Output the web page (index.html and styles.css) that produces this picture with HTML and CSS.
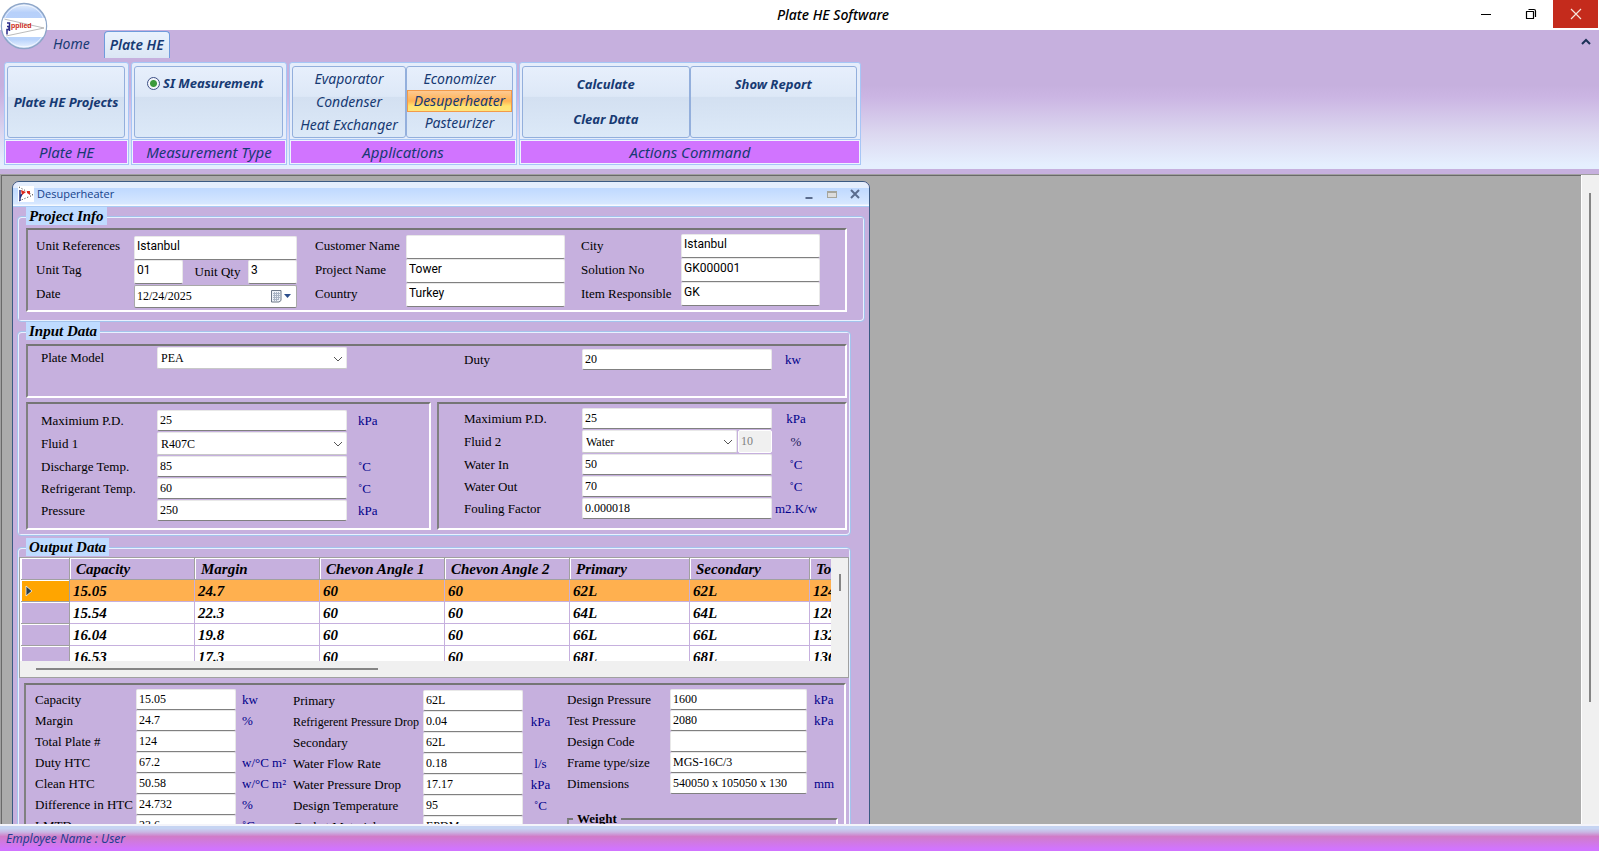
FILE: index.html
```html
<!DOCTYPE html>
<html lang="en">
<head>
<meta charset="utf-8">
<title>Plate HE Software</title>
<link rel="stylesheet" href="styles.css">
</head>
<body>
<header class="titlebar">
  <h1 class="app-title">Plate HE Software</h1>
  <div class="window-controls">
    <button class="wc" aria-label="Minimize"><svg width="12" height="12" viewBox="0 0 12 12"><path d="M1 6.500h10" stroke="#000" fill="none"/></svg></button>
    <button class="wc" aria-label="Restore"><svg width="12" height="12" viewBox="0 0 12 12"><path d="M1.500 3.500h7v7h-7zM3.500 1.500h5.500q1.500 0 1.500 1.500v6" stroke="#000" stroke-width="1.200" stroke-linejoin="round" fill="none"/></svg></button>
    <button class="wc close" aria-label="Close"><svg width="12" height="12" viewBox="0 0 12 12"><path d="M1 1l10 10M11 1L1 11" stroke="#f6e4dc" stroke-width="1.200" fill="none"/></svg></button>
  </div>
</header>

<button class="orb" aria-label="Application menu">
  <svg width="48" height="48" viewBox="0 0 48 48">
    <defs>
      <linearGradient id="orbfill" x1="0" y1="0" x2="0" y2="1"><stop offset="0" stop-color="#e8f0fc"/><stop offset=".2" stop-color="#b7d0fa"/><stop offset=".8" stop-color="#b9d3fb"/><stop offset="1" stop-color="#edf5ff"/></linearGradient>
      <clipPath id="orbclip"><circle cx="24" cy="24" r="22"/></clipPath>
    </defs>
    <circle cx="24" cy="24" r="22.500" fill="url(#orbfill)" stroke="#8ea6c8" stroke-width="1.500"/>
    <g clip-path="url(#orbclip)">
      <rect x="2" y="16" width="44" height="19" fill="#fff"/>
      <path d="M4 17L44 26L6 34" fill="none" stroke="#aaa" stroke-width=".8"/>
      <path d="M7 21h2.500v8M7 24.500h2v3h-2v5" fill="none" stroke="#2d2d8a" stroke-width="1.500"/>
      <text x="11" y="26" font-family="Liberation Sans" font-weight="700" font-size="7" fill="#cc2a12">pplied</text>
    </g>
    <circle cx="24" cy="24" r="20.800" fill="none" stroke="#fff" stroke-opacity=".6"/>
  </svg>
</button>

<section class="ribbon">
  <nav class="tabs">
    <a class="tab" href="#home">Home</a>
    <a class="tab active" href="#plate-he">Plate HE</a>
    <button class="collapse" aria-label="Collapse ribbon"><svg width="10" height="8" viewBox="0 0 10 8"><path d="M1 6l4-4l4 4" fill="none" stroke="#1c3157" stroke-width="2"/></svg></button>
  </nav>
  <div class="groups">
    <section class="group g-projects">
      <div class="boxes"><div class="box middle"><button class="cmd strong">Plate HE Projects</button></div></div>
      <h2 class="caption">Plate HE</h2>
    </section>
    <section class="group g-measure">
      <div class="boxes"><div class="box measure"><input type="radio" id="si" name="measure" class="radio" checked><label for="si" class="strong">SI Measurement</label></div></div>
      <h2 class="caption">Measurement Type</h2>
    </section>
    <section class="group g-apps">
      <div class="boxes">
        <div class="box list wide"><button class="cmd">Evaporator</button><button class="cmd">Condenser</button><button class="cmd">Heat Exchanger</button></div>
        <div class="box list"><button class="cmd">Economizer</button><button class="cmd selected">Desuperheater</button><button class="cmd">Pasteurizer</button></div>
      </div>
      <h2 class="caption">Applications</h2>
    </section>
    <section class="group g-actions">
      <div class="boxes">
        <div class="box actions"><button class="cmd strong">Calculate</button><button class="cmd strong">Clear Data</button></div>
        <div class="box actions"><button class="cmd strong">Show Report</button></div>
      </div>
      <h2 class="caption">Actions Command</h2>
    </section>
  </div>
</section>

<main class="workspace">
  <div class="desk">
    <section class="child">
      <header class="child-bar">
        <svg width="16" height="16" viewBox="0 0 16 16"><rect width="16" height="16" fill="#fff"/><path d="M1 1l14 8M1 15l14-6" stroke="#333" stroke-dasharray="1 2" fill="none"/><path d="M2 4v11M2 12l2-4" stroke="#23307f" stroke-width="1.500" fill="none"/><path d="M3 4l5 2l-4 3zM9 5l3 0l0 4l-3-2z" fill="#d9261c"/></svg>
        <h2 class="child-title">Desuperheater</h2>
        <button class="cb" aria-label="Minimize"><svg width="10" height="10" viewBox="0 0 10 10"><path d="M1.500 9h7" stroke="#5a6c8e" stroke-width="2"/></svg></button>
        <button class="cb" aria-label="Maximize"><svg width="10" height="10" viewBox="0 0 10 10"><rect x=".5" y="2.500" width="9" height="6" fill="#dcdcdc" stroke="#a5a59c"/><path d="M0 3h10" stroke="#a5a59c" stroke-width="2"/></svg></button>
        <button class="cb" aria-label="Close"><svg width="10" height="10" viewBox="0 0 10 10"><path d="M1 1l8 8M9 1L1 9" stroke="#5a6c8e" stroke-width="2"/></svg></button>
      </header>

      <form class="content">
        <fieldset class="sect info">
          <legend>Project Info</legend>
          <div class="panel info-panel">
            <div class="form info-a">
              <label for="uref">Unit References</label><input id="uref" class="sans" value="Istanbul">
              <label for="utag">Unit Tag</label>
              <div class="pair"><input id="utag" class="sans" value="01"><label for="uqty">Unit Qty</label><input id="uqty" class="sans" value="3"></div>
              <label for="date">Date</label>
              <div class="date"><input id="date" value="12/24/2025"><svg width="22" height="14" viewBox="0 0 22 14"><path d="M1.500 1.500h9.500v10l-2 1.500h-7.500z" fill="#eef2f8" stroke="#6d7888"/><path d="M3 4.500h7M3 6.500h7M3 8.500h7M3 10.500h5M4.500 3v9M6.500 3v9M8.500 3v8" stroke="#a9b4c4"/><path d="M14 5h7l-3.500 4z" fill="#2d4f8c"/></svg></div>
            </div>
            <div class="form info-b">
              <label for="cust">Customer Name</label><input id="cust" class="sans" value="">
              <label for="proj">Project Name</label><input id="proj" class="sans" value="Tower">
              <label for="country">Country</label><input id="country" class="sans" value="Turkey">
            </div>
            <div class="form info-c">
              <label for="city">City</label><input id="city" class="sans" value="Istanbul">
              <label for="sol">Solution No</label><input id="sol" class="sans" value="GK000001">
              <label for="item">Item Responsible</label><input id="item" class="sans" value="GK">
            </div>
          </div>
        </fieldset>

        <fieldset class="sect input">
          <legend>Input Data</legend>
          <div class="panel model-panel">
            <div class="form in-a">
              <label for="model">Plate Model</label>
              <span class="pick"><select id="model"><option>PEA</option></select><svg width="10" height="6" viewBox="0 0 10 6"><path d="M1 1l4 4l4-4" fill="none" stroke="#555"/></svg></span>
            </div>
            <div class="form in-b duty">
              <label for="duty">Duty</label><input id="duty" value="20"><span class="unit">kw</span>
            </div>
          </div>
          <div class="fluids">
            <div class="panel fluid-1">
              <div class="form in-a five">
                <label for="pd1">Maximium P.D.</label><input id="pd1" value="25"><span class="unit">kPa</span>
                <label for="f1">Fluid 1</label><span class="pick"><select id="f1"><option>R407C</option></select><svg width="10" height="6" viewBox="0 0 10 6"><path d="M1 1l4 4l4-4" fill="none" stroke="#555"/></svg></span><span></span>
                <label for="dt">Discharge Temp.</label><input id="dt" value="85"><span class="unit">˚C</span>
                <label for="rt">Refrigerant Temp.</label><input id="rt" value="60"><span class="unit">˚C</span>
                <label for="pr">Pressure</label><input id="pr" value="250"><span class="unit">kPa</span>
              </div>
            </div>
            <div class="panel fluid-2">
              <div class="form in-b five">
                <label for="pd2">Maximium P.D.</label><input id="pd2" value="25"><span class="unit">kPa</span>
                <label for="f2">Fluid 2</label><span class="split"><span class="pick"><select id="f2"><option>Water</option></select><svg width="10" height="6" viewBox="0 0 10 6"><path d="M1 1l4 4l4-4" fill="none" stroke="#555"/></svg></span><input class="off" aria-label="Fluid 2 percentage" value="10" disabled></span><span class="unit pct">%</span>
                <label for="wi">Water In</label><input id="wi" value="50"><span class="unit">˚C</span>
                <label for="wo">Water Out</label><input id="wo" value="70"><span class="unit">˚C</span>
                <label for="ff">Fouling Factor</label><input id="ff" value="0.000018"><span class="unit">m2.K/w</span>
              </div>
            </div>
          </div>
        </fieldset>

        <fieldset class="sect output">
          <legend>Output Data</legend>
          <div class="gridview">
            <div class="grid-clip">
              <table class="grid">
                <colgroup><col class="c-head"><col class="c-wide"><col class="c-wide"><col class="c-wide"><col class="c-wide"><col class="c-std"><col class="c-std"><col class="c-std"></colgroup>
                <thead><tr><th></th><th>Capacity</th><th>Margin</th><th>Chevon Angle 1</th><th>Chevon Angle 2</th><th>Primary</th><th>Secondary</th><th>Total Plate</th></tr></thead>
                <tbody>
                  <tr class="current"><th><svg width="9" height="12" viewBox="0 0 9 12"><path d="M2 1v10l6-5z" fill="#29404f" stroke="#f4f4f4" stroke-width=".8"/></svg></th><td>15.05</td><td>24.7</td><td>60</td><td>60</td><td>62L</td><td>62L</td><td>124</td></tr>
                  <tr><th></th><td>15.54</td><td>22.3</td><td>60</td><td>60</td><td>64L</td><td>64L</td><td>128</td></tr>
                  <tr><th></th><td>16.04</td><td>19.8</td><td>60</td><td>60</td><td>66L</td><td>66L</td><td>132</td></tr>
                  <tr><th></th><td>16.53</td><td>17.3</td><td>60</td><td>60</td><td>68L</td><td>68L</td><td>136</td></tr>
                </tbody>
              </table>
            </div>
            <div class="vbar"><div class="vthumb"></div></div>
            <div class="hbar"><div class="hthumb"></div></div>
          </div>

          <div class="panel result-panel">
            <div class="form results res-a">
              <label for="o1">Capacity</label><input id="o1" value="15.05"><span class="unit">kw</span>
              <label for="o2">Margin</label><input id="o2" value="24.7"><span class="unit">%</span>
              <label for="o3">Total Plate #</label><input id="o3" value="124"><span></span>
              <label for="o4">Duty HTC</label><input id="o4" value="67.2"><span class="unit">w/°C m²</span>
              <label for="o5">Clean HTC</label><input id="o5" value="50.58"><span class="unit">w/°C m²</span>
              <label for="o6">Difference in HTC</label><input id="o6" value="24.732"><span class="unit">%</span>
              <label for="o7">LMTD</label><input id="o7" value="23.6"><span class="unit">˚C</span>
            </div>
            <div class="form results res-b">
              <label for="p1">Primary</label><input id="p1" value="62L"><span></span>
              <label for="p2" class="small">Refrigerent Pressure Drop</label><input id="p2" value="0.04"><span class="unit">kPa</span>
              <label for="p3">Secondary</label><input id="p3" value="62L"><span></span>
              <label for="p4">Water Flow Rate</label><input id="p4" value="0.18"><span class="unit">l/s</span>
              <label for="p5">Water Pressure Drop</label><input id="p5" value="17.17"><span class="unit">kPa</span>
              <label for="p6">Design Temperature</label><input id="p6" value="95"><span class="unit">˚C</span>
              <label for="p7">Gasket Material</label><input id="p7" value="EPDM"><span></span>
            </div>
            <div class="res-right">
              <div class="form results res-c">
                <label for="q1">Design Pressure</label><input id="q1" value="1600"><span class="unit">kPa</span>
                <label for="q2">Test Pressure</label><input id="q2" value="2080"><span class="unit">kPa</span>
                <label for="q3">Design Code</label><input id="q3" value=""><span></span>
                <label for="q4">Frame type/size</label><input id="q4" value="MGS-16C/3"><span></span>
                <label for="q5">Dimensions</label><input id="q5" value="540050 x 105050 x 130"><span class="unit">mm</span>
              </div>
              <fieldset class="weight"><legend>Weight</legend></fieldset>
            </div>
          </div>
        </fieldset>
      </form>
    </section>
  </div>
  <div class="page-bar"><div class="page-thumb"></div></div>
</main>

<footer class="status">Employee Name : User</footer>
</body>
</html>
```

FILE: styles.css
```css
* { box-sizing: border-box; }

:root {
  --lilac: #c6b0de;
  --ui: "Noto Sans", "Open Sans", sans-serif;
  --serif: "Liberation Serif", serif;
}

body {
  margin: 0;
  height: 100vh;
  display: flex;
  flex-direction: column;
  overflow: hidden;
  position: relative;
  background: var(--lilac);
  font-family: var(--ui);
}

button { border: 0; padding: 0; background: none; font: inherit; color: inherit; }
h1, h2 { margin: 0; font-weight: 400; }
svg { display: block; }

/* Title bar */
.titlebar { display: flex; height: 30px; flex: none; padding-right: 1px; background: #fff; }
.app-title {
  flex: 1;
  padding-left: 203px;
  text-align: center;
  font: italic 500 14px/30px var(--ui);
  color: #000;
}
.window-controls { display: flex; height: 28px; }
.wc { width: 45px; display: grid; place-items: center; }
.close { background: #c42b1c; }

.orb { position: absolute; left: 0; top: 2px; z-index: 2; }

/* Ribbon */
.ribbon {
  flex: none;
  font-style: italic;
  color: #173a73;
  border-bottom: 5px solid var(--lilac);
  background: linear-gradient(var(--lilac) 40%, #cbb5e3 48%, #dcd8f0 75%, #e5effe 97%);
}
.tabs { display: flex; height: 32px; padding: 1px 8px 4px 46px; font-size: 14px; line-height: 26px; }
.tab { padding: 0 7px; color: inherit; text-decoration: none; }
.tab.active {
  margin-left: 7px;
  padding: 0 5px;
  border: 1px solid #6f9bdc;
  border-bottom: 0;
  border-radius: 4px 4px 0 0;
  background: linear-gradient(#eaf2fd, #dbe6f4);
  font-weight: 600;
  line-height: 25px;
}
.collapse { margin-left: auto; align-self: flex-start; padding-top: 7px; }

.groups { display: flex; gap: 2px; padding: 0 4px 4px; }
.group {
  display: flex;
  flex-direction: column;
  border: 1px solid #a6c6f6;
  border-radius: 3px;
  background: #e5edfb;
}
.g-projects { width: 125px; }
.g-measure { width: 156px; }
.g-apps { width: 228px; }
.g-actions { width: 342px; }
.boxes { display: flex; height: 76px; padding: 3px 3px 1px 2px; }
.box {
  flex: 1;
  display: flex;
  border: 1px solid #93afdc;
  border-radius: 3px;
  background: linear-gradient(#e7effc, #dde8f7 42%, #d3e0f1 43%, #dce9f8);
}
.middle { align-items: center; justify-content: center; }
.measure { align-items: flex-start; gap: 3px; padding: 7px 0 0 12px; }
.measure label { line-height: 18px; }
.radio {
  appearance: none;
  width: 13px;
  height: 13px;
  margin: 3px 0 0;
  border: 1px solid #3d4f86;
  border-radius: 50%;
  background: radial-gradient(circle, #3c9a3c 3px, #f3f6fb 4px);
}
.list { flex-direction: column; padding-top: 1px; }
.list.wide { flex: none; width: 114px; padding-top: 0; }
.cmd { font-size: 14px; line-height: 22px; white-space: nowrap; text-align: center; }
.wide .cmd { line-height: 23px; }
.strong, .cmd.strong { font-size: 13px; font-weight: 700; }
.selected {
  line-height: 20px;
  border: 1px solid #f29a4a;
  background: linear-gradient(#fdc991, #ffb254 50%, #ffe36f 75%, #ffe47a);
}
.actions { flex-direction: column; }
.actions .cmd { line-height: 35px; }
.caption {
  margin: 1px 0 0;
  border: 1px solid #eef3ff;
  outline: 1px solid #a6c6f6;
  background: #d174ff;
  font-size: 15px;
  line-height: 22px;
  text-align: center;
}

/* Workspace */
.workspace {
  flex: 1;
  min-height: 0;
  display: flex;
  border-top: 1px solid #a0a0a0;
  border-left: 1px solid #a0a0a0;
  background: #ababab;
}
.desk {
  flex: 1;
  min-width: 0;
  overflow: hidden;
  padding: 5px 0 0 10px;
  border-top: 1px solid #696969;
  border-left: 1px solid #696969;
}
.page-bar { width: 18px; padding: 18px 7px; background: #f0f0f0; border-left: 1px solid #fff; }
.page-thumb { width: 2px; height: 83%; background: #858585; }

/* Child window */
.child {
  width: 54%;
  min-width: 858px;
  border: 1px solid #3b5a82;
  border-radius: 7px 7px 0 0;
  background: var(--lilac);
  overflow: hidden;
}
.child-bar {
  display: flex;
  align-items: center;
  gap: 3px;
  height: 25px;
  padding: 0 6px 0 5px;
  border-bottom: 1px solid #a9cbf5;
  background: linear-gradient(#e4eefd 25%, #bfd9ff 26%, #d6e7ff 90%, #fff);
}
.child-title { flex: 1; font: 11px/20px "Open Sans", sans-serif; color: #15428b; }
.cb { width: 20px; display: grid; place-items: center; }
.cb:last-child { width: 16px; margin-left: 2px; }

.content { display: block; padding: 0 4px; font: 13px/16px var(--serif); color: #000; }
.sect {
  min-width: 0;
  margin: 0 14px 2px 0;
  padding: 4px 3px 5px 8px;
  border: 1px solid #a3c4ec;
  border-radius: 4px;
  box-shadow: inset 1px 1px #e8f1ff, inset -1px -1px #e8f1ff;
}
.sect > legend {
  padding: 0 3px;
  background: #bfdbff;
  font: italic 700 15px/18px var(--serif);
}
.sect.info { margin-right: 0; margin-bottom: 0; padding: 3px 17px 9px 8px; }
.sect.output { padding: 1px 1px 9px; }
.output > legend { margin-left: 7px; }

.panel {
  border: 2px solid;
  border-color: #757575 #fff #fff #808080;
}
.form { display: grid; align-items: center; align-content: start; }
.form label { white-space: nowrap; }
.form input, .form select {
  width: 100%;
  min-width: 0;
  height: 100%;
  margin: 0;
  padding: 0 2px;
  border: 1px solid #e8e8e8;
  border-bottom-color: #808080;
  border-radius: 2px;
  background: #fff;
  font: 12px/16px var(--serif);
  color: #000;
}
.form .sans { padding-bottom: 4px; font: 12px/14px Roboto, "Liberation Sans", sans-serif; }
.unit { color: #00008b; white-space: nowrap; }

.pick { position: relative; display: block; height: 100%; }
.form select { appearance: none; padding: 0 3px; border-bottom-color: #c8c8c8; }
.pick svg { position: absolute; right: 4px; top: 9px; }

/* Project info */
.info-panel { display: flex; height: 84px; }
.info .form { grid-auto-rows: 24px; }
.info-a { grid-template-columns: 98px 163px; padding: 6px 0 0 8px; }
.info-a > label { padding-bottom: 4px; }
.info-b { grid-template-columns: 91px 159px; padding: 5px 0 0 18px; }
.info-b > label { padding-bottom: 2px; }
.info-c { grid-template-columns: 100px 139px; padding: 4px 0 0 16px; }
.pair { display: grid; grid-template-columns: 49px 1fr 49px; align-items: center; height: 100%; }
.pair label { padding-left: 4px; text-align: center; }
.date { position: relative; height: 100%; padding-top: 1px; }
.form .date input { border-color: #a8a8a8; border-bottom-color: #808080; }
.date svg { position: absolute; right: 5px; top: 5px; }

/* Input data */
.model-panel { display: flex; height: 54px; margin-bottom: 4px; }
.in-a { grid-template-columns: 116px 190px 1fr; grid-auto-rows: 22px; padding: 1px 0 0 13px; }
.in-b { grid-template-columns: 118px 190px 1fr; padding: 3px 0 0 25px; }
.duty { grid-auto-rows: 21px; margin-left: 92px; }
.duty .unit { padding-left: 13px; }
.fluids { display: flex; gap: 6px; }
.fluid-1 { width: 405px; padding: 5px 0 0; }
.fluid-2 { flex: 1; padding: 1px 0 0; }
.panel .five { grid-template-rows: 21px 23px 21px 21px 21px; gap: 1px 0; }
.fluid-1, .fluid-2 { height: 128px; }
.fluid-1 .unit { padding-left: 11px; }
.fluid-2 .unit { width: 48px; text-align: center; }
.pct { color: #1c1c5c; }
.split { display: grid; grid-template-columns: 1fr 34px; gap: 1px; height: 100%; }
.form .off { background: #f0f0f0; border: 1px solid #fff; color: #808080; }

/* Result grid */
.gridview {
  display: grid;
  grid-template-columns: 1fr 17px;
  grid-template-rows: 103px 16px;
  border: 1px solid #a0a0a0;
  background: #f0f0f0;
}
.grid-clip { overflow: hidden; min-width: 0; border-left: 1px solid #fff; }
.grid {
  width: 909px;
  table-layout: fixed;
  border-collapse: separate;
  border-spacing: 0;
  font: italic 700 15px/18px var(--serif);
}
.c-head { width: 49px; }
.c-wide { width: 125px; }
.c-std { width: 120px; }
.grid tr { height: 22px; }
.grid th, .grid td { padding: 0 3px; text-align: left; white-space: nowrap; }
.grid td { background: #fff; border-right: 1px solid var(--lilac); border-bottom: 1px solid var(--lilac); }
.grid th { font: inherit; background: var(--lilac); border-right: 1px solid #a0a0a0; border-bottom: 1px solid #a0a0a0; box-shadow: inset 1px 1px #fff; }
.grid thead th { padding-left: 6px; }
.grid .current td { background: #ffb04f; }
.grid .current th { background: #ffa500; }
.vbar { display: flex; justify-content: center; padding-top: 16px; }
.vthumb { width: 2px; height: 17px; background: #858585; }
.hbar { grid-column: 1 / -1; padding: 7px 16px; }
.hthumb { width: 43%; height: 2px; background: #858585; }

/* Results */
.result-panel { display: flex; margin: 5px 3px 0 5px; }
.results { grid-auto-rows: 21px; padding-top: 4px; }
.res-a { grid-template-columns: 101px 100px 50px; padding-left: 9px; }
.res-a .unit { padding-left: 6px; }
.res-b { grid-template-columns: 130px 100px 35px; padding: 5px 0 0 7px; }
.res-b .unit { text-align: center; }
.res-right { flex: 1; padding: 0 6px 0 9px; }
.res-c { grid-template-columns: 103px 137px 1fr; }
.res-c .unit { padding-left: 7px; }
.form .small { font-size: 12px; }
.weight {
  min-width: 0;
  height: 80px;
  margin: 17px 0 0;
  padding: 0 4px;
  border: 2px solid;
  border-color: #757575 #fff #fff #808080;
}
.weight legend { padding: 0 4px; font: 700 13px/16px var(--serif); }

/* Status bar */
.status {
  flex: none;
  height: 27px;
  padding: 2px 6px 0;
  border-top: 2px solid #f4f4fa;
  background: linear-gradient(#c6d4f2 10%, #c9b8e4 24%, #d07cc8 42%, #d174ff 92%);
  font: italic 12px/22px var(--ui);
  color: #1f3f90;
}
```
